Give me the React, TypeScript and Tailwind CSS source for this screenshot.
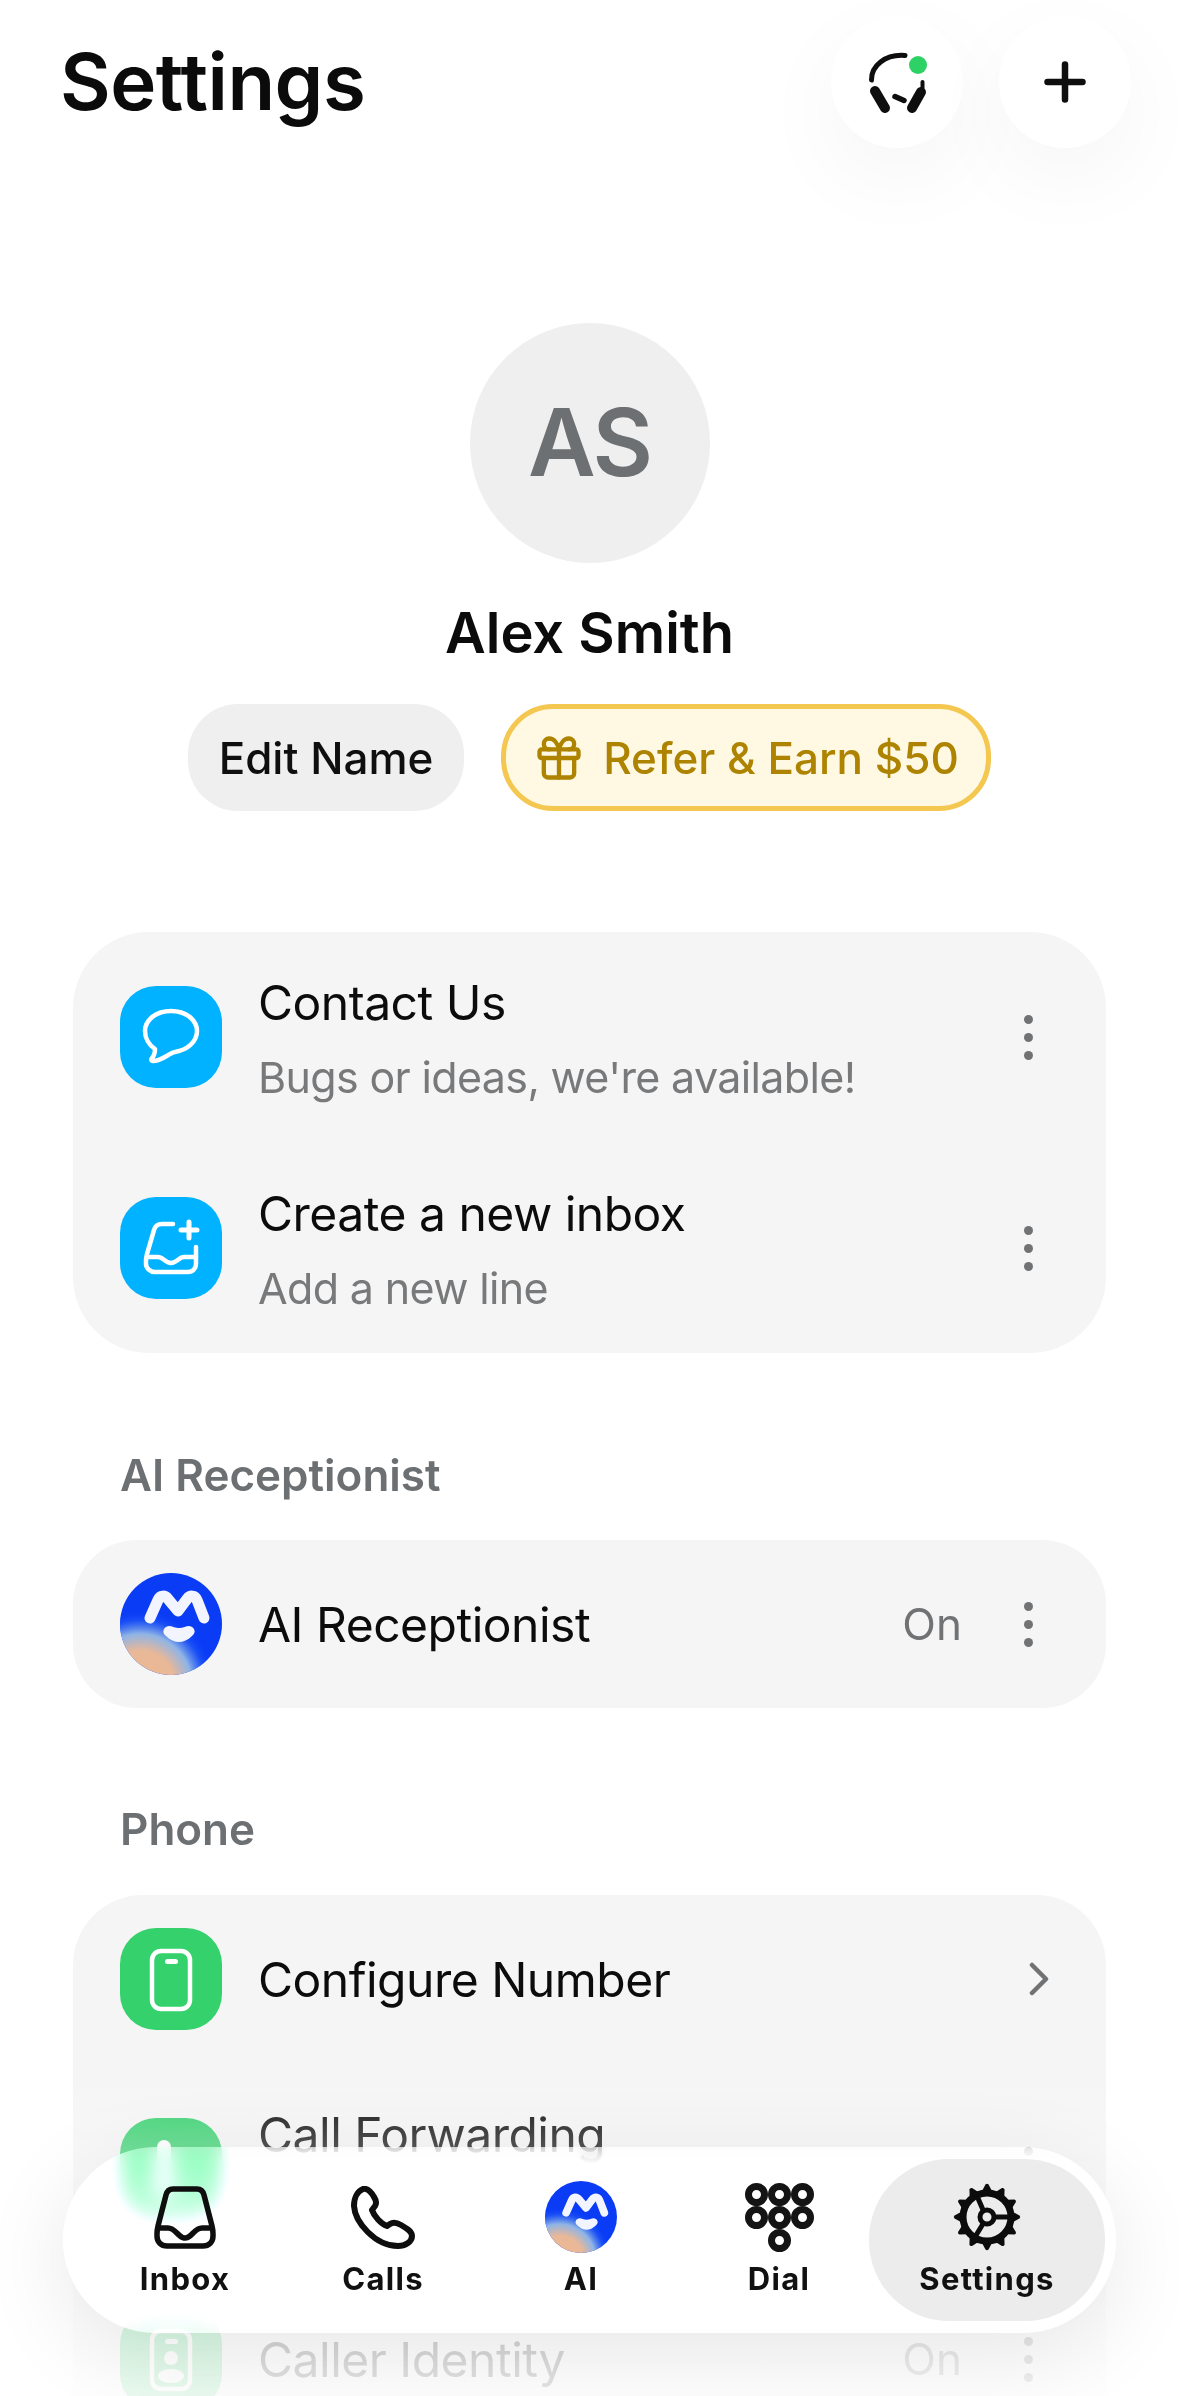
import React from "react";
import { Gift } from "lucide-react";

const W = "#fff";

function AiLogo({ size, id }: { size: number; id: string }) {
  return (
    <svg width={size} height={size} viewBox="0 0 102 102" className="shrink-0">
      <defs>
        <radialGradient id={id} cx="0.2" cy="1.1" r="0.74">
          <stop offset="0" stopColor="#f0b890" />
          <stop offset="0.46" stopColor="#e8b898" />
          <stop offset="0.68" stopColor="#8fb4e6" />
          <stop offset="0.86" stopColor="#1f55f5" stopOpacity="0.8" />
          <stop offset="1" stopColor="#0a3cff" stopOpacity="0" />
        </radialGradient>
      </defs>
      <circle cx="51" cy="51" r="51" fill="#0a3bf5" />
      <circle cx="51" cy="51" r="51" fill={`url(#${id})`} />
      <path d="M30 45 L38 27 C40 22 45 22 48 26 L58 38 L67 26 C70 22 75 22 77 27 L84 45" fill="none" stroke="#f2f5ff" strokeWidth="11" strokeLinecap="round" strokeLinejoin="round" />
      <path d="M46 54 C50 51 53 55 59 55 C65 55 68 51 72 54 C75 56 76 60 72 63 C68 67 63 69 59 69 C55 69 50 67 46 63 C42 60 43 56 46 54Z" fill="#f2f5ff" />
    </svg>
  );
}

function ChatIcon() {
  return (
    <svg width="102" height="102" viewBox="0 0 102 102" fill="none" stroke={W} strokeWidth="4.5" strokeLinejoin="round">
      <path d="M51 25 C66 25 77 34 77 45 C77 56 67 64 55 66 C49 67 42 75 33 75 C31 75 31 73 32 72 C34 70 35 67 35 63 C29 59 25 52 25 45 C25 34 36 25 51 25Z" />
    </svg>
  );
}

function InboxPlusIcon() {
  return (
    <svg width="102" height="102" viewBox="0 0 102 102" fill="none" stroke={W} strokeWidth="4.5" strokeLinecap="round" strokeLinejoin="round">
      <path d="M53 27 H42 C38 27 35 29 34 33 L27 57 C26.5 59 26 61 26 63 V67 C26 71 30 75 35 75 H68 C73 75 76 71 76 67 V50" />
      <path d="M27 60 H38 C43 60 45 66 51 66 C57 66 59 60 64 60 H76" />
      <path d="M69 25 V41 M61 33 H77" strokeWidth="5" />
    </svg>
  );
}

function PhoneBody({ children }: { children?: React.ReactNode }) {
  return (
    <svg width="102" height="102" viewBox="0 0 102 102" fill="none">
      <rect x="32" y="23" width="38" height="58" rx="9" stroke={W} strokeWidth="4.5" />
      <rect x="45" y="31" width="13" height="5" rx="2.5" fill={W} />
      {children}
    </svg>
  );
}

function ForwardIcon() {
  return (
    <svg width="102" height="102" viewBox="0 0 102 102" fill="none">
      <rect x="37" y="22" width="14" height="58" rx="7" fill={W} />
    </svg>
  );
}

function Dots() {
  return (
    <div className="flex flex-col gap-[9px] shrink-0">
      <div className="w-[9px] h-[9px] rounded-full bg-[#707274]" />
      <div className="w-[9px] h-[9px] rounded-full bg-[#707274]" />
      <div className="w-[9px] h-[9px] rounded-full bg-[#707274]" />
    </div>
  );
}

function Chevron() {
  return (
    <svg width="20" height="34" viewBox="0 0 20 34" fill="none" stroke="#707274" strokeWidth="4.5" strokeLinecap="round" strokeLinejoin="round" className="shrink-0 -mr-[16px]">
      <path d="M3 3 L17 17 L3 31" />
    </svg>
  );
}

function Row({
  icon,
  title,
  sub,
  value,
  end,
}: {
  icon: React.ReactNode;
  title: string;
  sub?: string;
  value?: string;
  end: React.ReactNode;
}) {
  return (
    <div className="flex items-center h-[168px] pl-[47px] pr-[73px]">
      {icon}
      <div className="ml-[36px] flex-1 min-w-0 pt-[2px]">
        <div className="text-[48px] leading-[62px] tracking-[-0.5px] text-[#0c0c0c] whitespace-nowrap">{title}</div>
        {sub && <div className="mt-[15px] text-[43px] leading-[56px] tracking-[-0.65px] text-[#78797b] whitespace-nowrap">{sub}</div>}
      </div>
      {value && <div className="text-[44px] leading-[56px] text-[#707274] mr-[62px]">{value}</div>}
      {end}
    </div>
  );
}

function Square({ color, children }: { color: string; children: React.ReactNode }) {
  return (
    <div className={`w-[102px] h-[102px] rounded-[36px] shrink-0 ${color}`}>{children}</div>
  );
}

function NavItem({ label, children }: { label: string; children: React.ReactNode }) {
  return (
    <div className="w-[198px] shrink-0 flex flex-col items-center">
      <div className="h-[72px] flex items-center justify-center">{children}</div>
      <div className="mt-[6px] text-[31px] leading-[40px] font-bold tracking-[1.3px] text-[#111]">{label}</div>
    </div>
  );
}

function Gear() {
  const teeth = [0, 30, 60, 90, 120, 150, 180, 210, 240, 270, 300, 330];
  return (
    <svg width="68" height="68" viewBox="0 0 68 68" fill="none" stroke="#0c0c0c">
      {teeth.map((a) => (
        <path key={a} d="M29 8 L32.5 1.5 Q34 0 35.5 1.5 L39 8Z" fill="#0c0c0c" stroke="none" transform={`rotate(${a} 34 34)`} />
      ))}
      <circle cx="34" cy="34" r="24" strokeWidth="7" />
      <circle cx="34" cy="34" r="7" strokeWidth="5" />
      <path d="M41 34 H57 M30.5 28 L24 13 M30.5 40 L22 54" strokeWidth="5" />
    </svg>
  );
}

export default function App() {
  return (
    <div className="relative w-[1179px] h-[2396px] overflow-hidden bg-white font-['Inter',sans-serif]">
      <header className="flex items-center justify-between pt-[16px] pl-[60px] pr-[48px]">
        <h1 className="text-[78px] leading-[132px] font-semibold text-[#0b0b0b] tracking-[-0.5px]">Settings</h1>
        <div className="flex gap-[36px]">
          <div className="w-[132px] h-[132px] rounded-full bg-white shadow-[0_30px_90px_rgba(0,0,0,0.045)]">
            <svg width="132" height="132" viewBox="0 0 132 132" fill="none" stroke="#0e0e0e" strokeLinecap="round">
              <path d="M40.500 64 C40 50 54 38 74 39.500" strokeWidth="5" />
              <path d="M44 75 L54 92" strokeWidth="10" />
              <path d="M81 92 L90 76" strokeWidth="10" />
              <path d="M91.500 66 L91.500 72" strokeWidth="4" />
              <path d="M64 80.500 L73 84.500" strokeWidth="5.500" />
              <circle cx="87" cy="49" r="9" fill="#2ed165" stroke="none" />
            </svg>
          </div>
          <div className="w-[132px] h-[132px] rounded-full bg-white shadow-[0_30px_90px_rgba(0,0,0,0.045)] flex items-center justify-center">
            <svg width="42" height="42" viewBox="0 0 42 42" fill="none" stroke="#0e0e0e" strokeWidth="6.500" strokeLinecap="round">
              <path d="M21 3.500 V38.500 M3.500 21 H38.500" />
            </svg>
          </div>
        </div>
      </header>

      <section className="flex flex-col items-center">
        <div className="mt-[175px] w-[240px] h-[240px] rounded-full bg-[#efefef] flex items-center justify-center text-[93px] tracking-[-2px] font-semibold text-[#6d7072]">AS</div>
        <div className="mt-[35px] text-[56px] leading-[70px] font-semibold text-[#0b0b0b]">Alex Smith</div>
        <div className="mt-[36px] flex gap-[37px] h-[107px]">
          <div className="w-[276px] rounded-[50px] bg-[#efefef] flex items-center justify-center text-[44px] font-medium text-[#0f0f0f]">Edit Name</div>
          <div className="w-[490px] rounded-[52px] bg-[#fff8e3] border-[5px] border-[#f3c750] flex items-center justify-center gap-[18px] text-[44px] font-medium text-[#ad8300]">
            <Gift size={52} strokeWidth={2} color="#ad8300" />
            <span>Refer &amp; Earn $50</span>
          </div>
        </div>
      </section>

      <main className="px-[73px]">
        <div className="mt-[121px] rounded-[76px] bg-[#f5f5f5] py-[21px] flex flex-col gap-[43px]">
          <Row icon={<Square color="bg-[#00b2ff]"><ChatIcon /></Square>} title="Contact Us" sub="Bugs or ideas, we're available!" end={<Dots />} />
          <Row icon={<Square color="bg-[#00b2ff]"><InboxPlusIcon /></Square>} title="Create a new inbox" sub="Add a new line" end={<Dots />} />
        </div>

        <div className="mt-[92px] pl-[47px] text-[44px] leading-[60px] font-semibold text-[#6d7072]">AI Receptionist</div>
        <div className="mt-[35px] rounded-[64px] bg-[#f5f5f5]">
          <Row icon={<AiLogo size={102} id="ai-a" />} title="AI Receptionist" value="On" end={<Dots />} />
        </div>

        <div className="mt-[91px] pl-[47px] text-[44px] leading-[60px] font-semibold text-[#6d7072]">Phone</div>
        <div className="mt-[36px] rounded-[70px] bg-[#f5f5f5] flex flex-col gap-[22px] pb-[40px]">
          <Row icon={<Square color="bg-[#34d16d]"><PhoneBody /></Square>} title="Configure Number" end={<Chevron />} />
          <Row icon={<Square color="bg-[#34d16d]"><ForwardIcon /></Square>} title="Call Forwarding" sub="Disable if you decide to leave" end={<Dots />} />
          <Row
            icon={
              <Square color="bg-[#34d16d]">
                <PhoneBody>
                  <circle cx="51" cy="50" r="7" fill={W} />
                  <ellipse cx="51" cy="68" rx="13" ry="7" fill={W} />
                </PhoneBody>
              </Square>
            }
            title="Caller Identity"
            value="On"
            end={<Dots />}
          />
        </div>
      </main>

      <div className="absolute left-0 right-0 bottom-0 h-[320px] bg-gradient-to-b from-white/0 via-white/65 to-white/90" />

      <nav className="absolute left-[63px] top-[2147px] w-[1053px] h-[186px] rounded-[93px] bg-white/45 backdrop-blur-[10px] backdrop-brightness-[1.14] backdrop-saturate-[1.8] shadow-[0_20px_90px_rgba(0,0,0,0.09)] flex items-center pl-[23px] pr-[11px]">
        <NavItem label="Inbox">
          <svg width="62" height="63" viewBox="0 0 62 63" fill="none" stroke="#0e0e0e" strokeWidth="5.500" strokeLinejoin="round">
            <path d="M19 3 H43 C47 3 49 5 50 9 L58 40 C59 44 59 46 59 48 V50 C59 56 55 60 49 60 H13 C7 60 3 56 3 50 V48 C3 46 3 44 4 40 L12 9 C13 5 15 3 19 3Z" />
            <path d="M4 42 H14 C22 42 24 52 31 52 C38 52 40 42 48 42 H58" />
          </svg>
        </NavItem>
        <NavItem label="Calls">
          <svg width="64" height="63" viewBox="0 0 64 63" fill="none" stroke="#0e0e0e" strokeWidth="6" strokeLinejoin="round">
            <path d="M12 3 C7 5 3 11 3 20 C4 36 24 60 47 60 C54 60 61 56 61 50 C61 46 57 43 50 39 C45 36 42 36 39 38 L36 40 C30 38 23 30 21 24 L24 20 C26 17 25 14 23 11 C19 4 16 2 12 3Z" />
          </svg>
        </NavItem>
        <NavItem label="AI">
          <AiLogo size={72} id="ai-b" />
        </NavItem>
        <NavItem label="Dial">
          <svg width="69" height="69" viewBox="0 0 69 69" fill="none" stroke="#141414" strokeWidth="7">
            <circle cx="11.500" cy="11.500" r="8" />
            <circle cx="34.500" cy="11.500" r="8" />
            <circle cx="57.500" cy="11.500" r="8" />
            <circle cx="11.500" cy="34.500" r="8" />
            <circle cx="34.500" cy="34.500" r="8" />
            <circle cx="57.500" cy="34.500" r="8" />
            <circle cx="34.500" cy="57.500" r="8" />
          </svg>
        </NavItem>
        <div className="w-[236px] h-[162px] shrink-0 -ml-[9px] rounded-[80px] bg-[#ececec] flex flex-col items-center justify-center">
          <div className="h-[72px] flex items-center justify-center">
            <Gear />
          </div>
          <div className="mt-[6px] text-[31px] leading-[40px] font-bold tracking-[1.3px] text-[#111]">Settings</div>
        </div>
      </nav>
    </div>
  );
}
